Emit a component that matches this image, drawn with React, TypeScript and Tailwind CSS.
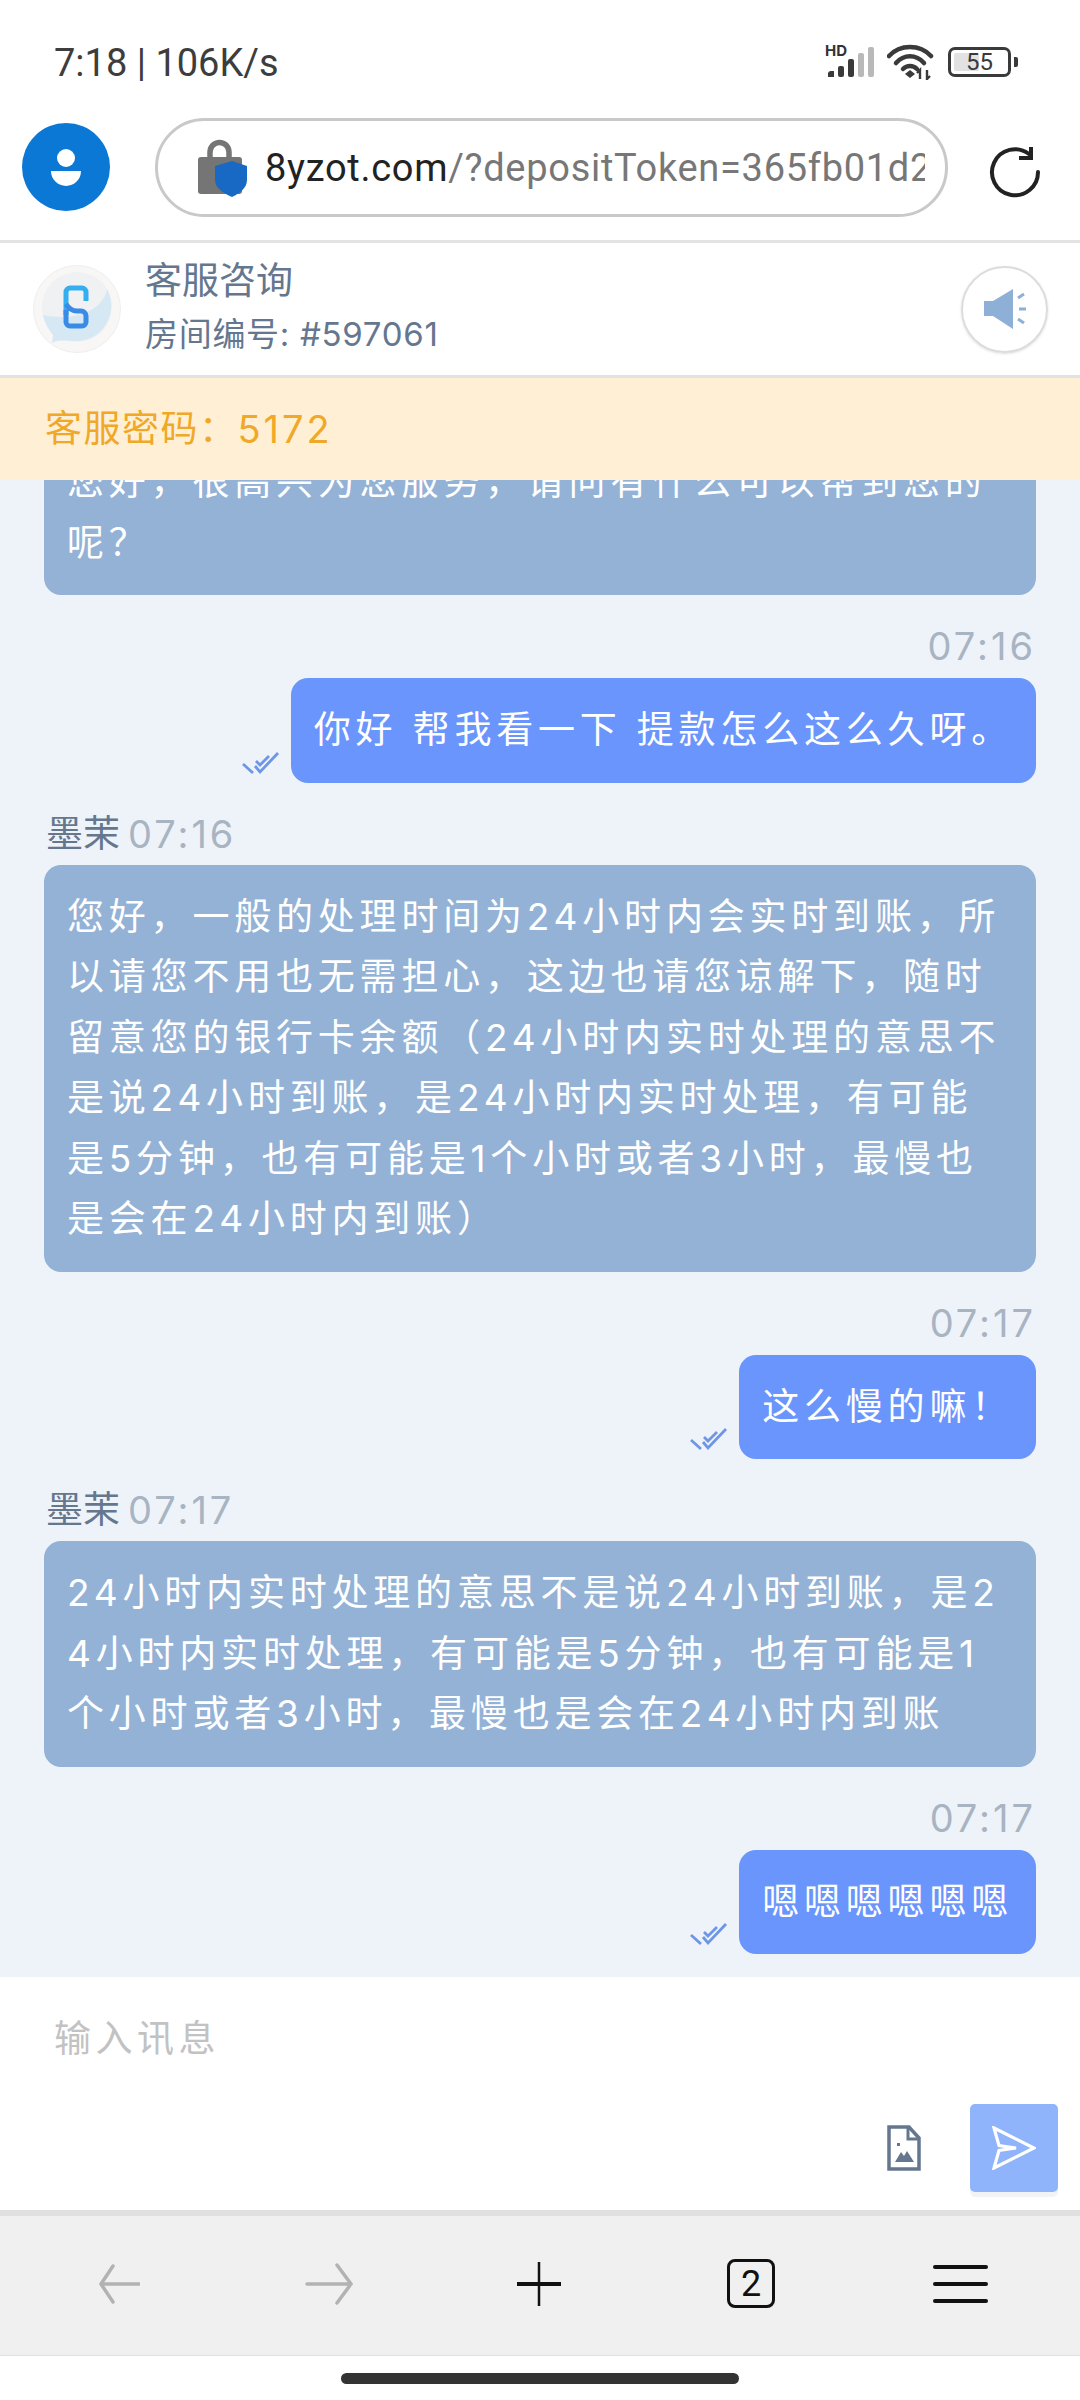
const statusIcons = (
  <div className="flex items-center">
    <div className="relative w-[50px] h-[32px]">
      <span className="absolute left-0 top-[-3px] text-[15px] leading-[16px] font-bold text-[#333] font-[Inter,sans-serif]">HD</span>
      <svg width="50" height="32" viewBox="0 0 50 32" className="absolute left-0 top-0">
        <path d="M3 27a3 3 0 0 1 3-2h3v6H3z" fill="#3a3a3a" />
        <rect x="13" y="20" width="6" height="11" rx="2" fill="#3a3a3a" />
        <rect x="23" y="13" width="6" height="18" rx="2" fill="#3a3a3a" />
        <rect x="33" y="7" width="6" height="24" rx="2" fill="#b9b9b9" />
        <rect x="43" y="1" width="6" height="30" rx="2" fill="#b9b9b9" />
      </svg>
    </div>
    <svg width="48" height="36" viewBox="0 0 48 36" className="ml-[12px]">
      <path d="M2 12C13 0 33 0 44 12" fill="none" stroke="#3a3a3a" strokeWidth="4.500" strokeLinecap="round" />
      <path d="M9 19C17 10 29 10 37 19" fill="none" stroke="#3a3a3a" strokeWidth="4.500" strokeLinecap="round" />
      <path d="M16 25C20 21 26 21 30 25" fill="none" stroke="#3a3a3a" strokeWidth="4.500" strokeLinecap="round" />
      <path d="M18 30L23 26L28 30L23 34Z" fill="#3a3a3a" />
      <path d="M33 35V26L30 29M40 26V35L43 32" fill="none" stroke="#3a3a3a" strokeWidth="2.400" />
    </svg>
    <div className="ml-[13px] flex items-center">
      <div className="w-[63px] h-[30px] rounded-[7px] border-[3px] border-[#3a3a3a] p-[3px] relative">
        <div className="w-[25px] h-full bg-[#e2e2e2] rounded-[2px]" />
        <span className="absolute inset-0 flex items-center justify-center text-[24px] leading-none text-[#3a3a3a] font-[Roboto,sans-serif]">55</span>
      </div>
      <div className="ml-[3px] w-[4px] h-[10px] rounded-r-[2px] bg-[#3a3a3a]" />
    </div>
  </div>
);

const lockIcon = (
  <svg width="50" height="58" viewBox="0 0 50 58" className="shrink-0">
    <path d="M12 20V13a9.500 9.500 0 0 1 19 0v7" fill="none" stroke="#757575" strokeWidth="5.500" />
    <rect x="0" y="18" width="44" height="37" rx="3" fill="#757575" />
    <path d="M34 22L49 27V41C49 49 42 54 34 58C25 54 17 49 17 41V27Z" fill="#1769c4" />
  </svg>
);

const doubleCheck = (
  <svg width="38" height="24" viewBox="0 0 38 24" className="mb-[7px] mr-[11px] shrink-0">
    <path d="M1 12L11 21M13 14L18 20L36 1M14 9L18 13L27 4" fill="none" stroke="#6e96e6" strokeWidth="2.800" />
  </svg>
);

function Bubble({ side, text }: { side: 'left' | 'right'; text: string }) {
  const color = side === 'left' ? 'bg-[#93b2d6] w-full' : 'bg-[#6a95fd]';
  return (
    <div className={`${color} rounded-[17px] px-[23px] py-[22px] text-white text-[37px] leading-[60.5px] tracking-[4.8px] whitespace-pre`}>
      {text}
    </div>
  );
}

function Incoming({ name, time, text }: { name: string; time: string; text: string }) {
  return (
    <div className="mt-[31px]">
      <div className="h-[40px] mb-[11px] flex items-center gap-[8px] pl-[2px] text-[37px] leading-[40px]">
        <span className="text-[#64778f]">{name}</span>
        <span className="text-[#a9b4c2] text-[38px] tracking-[3px]">{time}</span>
      </div>
      <Bubble side="left" text={text} />
    </div>
  );
}

function Outgoing({ time, text }: { time: string; text: string }) {
  return (
    <div className="mt-[31px]">
      <div className="h-[40px] mb-[12px] text-right text-[38px] leading-[40px] text-[#a9b4c2] tracking-[3px]">{time}</div>
      <div className="flex justify-end items-end">
        {doubleCheck}
        <Bubble side="right" text={text} />
      </div>
    </div>
  );
}

export default function App() {
  return (
    <div className="w-[1080px] h-[2400px] bg-white flex flex-col overflow-hidden font-[Inter,'Noto_Sans_CJK_SC',sans-serif]">
      {/* status bar */}
      <div className="h-[118px] pt-[44px] pl-[54px] pr-[62px] flex justify-between items-start shrink-0">
        <span className="text-[38px] leading-[38px] text-[#3d3d3d] font-[Roboto,sans-serif]">7:18 | 106K/s</span>
        {statusIcons}
      </div>

      {/* browser bar */}
      <div className="h-[125px] flex items-start pl-[22px] shrink-0 border-b-[3px] border-[#e3e3e3]">
        <div className="w-[88px] h-[88px] mt-[5px] rounded-full bg-[#0a78d4] flex flex-col items-center justify-center shrink-0">
          <div className="w-[18px] h-[18px] rounded-full bg-white" />
          <div className="w-[30px] h-[15px] mt-[4px] rounded-t-[5px] rounded-b-full bg-white" />
        </div>
        <div className="ml-[45px] w-[793px] h-[99px] rounded-full border-[3px] border-[#c9c9c9] flex items-center pl-[40px]">
          {lockIcon}
          <div className="ml-[17px] w-[660px] overflow-hidden whitespace-nowrap text-[38px] leading-[50px] tracking-[0.7px] text-[#777] font-[Roboto,sans-serif]">
            <span className="text-[#222]">8yzot.com</span>/?depositToken=365fb01d2a9c
          </div>
        </div>
        <svg width="54" height="54" viewBox="0 0 54 54" className="ml-[40px] mt-[28px] shrink-0">
          <path d="M41 8A23 23 0 1 0 50 26" fill="none" stroke="#222" strokeWidth="4" strokeLinecap="round" />
          <path d="M43 1V12H31" fill="none" stroke="#222" strokeWidth="4" />
        </svg>
      </div>

      {/* chat header */}
      <div className="h-[135px] flex items-center pl-[33px] pr-[32px] shrink-0 border-b-[3px] border-[#e2e2e2]">
        <svg width="88" height="88" viewBox="0 0 88 88" className="shrink-0">
          <circle cx="44" cy="44" r="43.500" fill="#f8f7f6" stroke="#eeeeee" />
          <circle cx="44" cy="42" r="35" fill="#eff1f3" />
          <path d="M74 24C72 40 50 58 10 50C12 60 17 66 20 70L19 78C26 74 34 76 44 76C62 76 76 62 78 44C79 36 77 30 74 24Z" fill="#d6e8f4" />
          <path d="M33 50V27a4 4 0 0 1 4-4h12a4 4 0 0 1 4 4v9" fill="none" stroke="#35aef0" strokeWidth="5" />
          <path d="M33 45v12a4 4 0 0 0 4 4h12a4 4 0 0 0 4-4V51a5 5 0 0 0-5-5h-4c-4 0-8-2-11-7" fill="none" stroke="#3a8ae8" strokeWidth="5" />
        </svg>
        <div className="ml-[24px] flex-1 text-[#64778f]">
          <div className="mt-[-8px] text-[37px] leading-[50px]">客服咨询</div>
          <div className="mt-[8px] text-[33px] leading-[40px] tracking-[0.7px]">房间编号: #597061</div>
        </div>
        <div className="w-[87px] h-[87px] rounded-full border-2 border-[#dcdcdc] shadow-sm flex items-center justify-center">
          <svg width="42" height="40" viewBox="0 0 42 40">
            <path d="M0 12H9L29 0V40L9 27H0Z" fill="#8fb0d6" />
            <path d="M34 9L40 5M35 20H42M34 30L40 34" fill="none" stroke="#8fb0d6" strokeWidth="3" />
          </svg>
        </div>
      </div>

      {/* password banner */}
      <div className="h-[102px] bg-[#fff0d5] flex items-center pl-[45px] text-[37px] text-[#f0a828] tracking-[1.5px] shrink-0 relative z-10">
        客服密码：<span className="text-[38px] tracking-[3px]">5172</span>
      </div>

      {/* messages */}
      <div className="h-[1497px] bg-[#eef3fa] overflow-hidden flex flex-col justify-end px-[44px] pb-[23px] shrink-0">
        <div className="shrink-0">
          <Bubble side="left" text={'您好，很高兴为您服务，请问有什么可以帮到您的\n呢？'} />
        </div>
        <Outgoing time="07:16" text="你好 帮我看一下 提款怎么这么久呀。" />
        <Incoming
          name="墨茉"
          time="07:16"
          text={'您好，一般的处理时间为24小时内会实时到账，所\n以请您不用也无需担心，这边也请您谅解下，随时\n留意您的银行卡余额（24小时内实时处理的意思不\n是说24小时到账，是24小时内实时处理，有可能\n是5分钟，也有可能是1个小时或者3小时，最慢也\n是会在24小时内到账）'}
        />
        <Outgoing time="07:17" text="这么慢的嘛！" />
        <Incoming
          name="墨茉"
          time="07:17"
          text={'24小时内实时处理的意思不是说24小时到账，是2\n4小时内实时处理，有可能是5分钟，也有可能是1\n个小时或者3小时，最慢也是会在24小时内到账'}
        />
        <Outgoing time="07:17" text="嗯嗯嗯嗯嗯嗯" />
      </div>

      {/* input */}
      <div className="h-[233px] relative shrink-0 bg-white">
        <div className="pt-[38px] pl-[54px] text-[37px] leading-[48px] tracking-[4.500px] text-[#c2c2c2]">输入讯息</div>
        <div className="absolute right-[22px] bottom-[18px] flex items-center">
          <svg width="34" height="46" viewBox="0 0 34 46" className="mr-[49px]">
            <path d="M2 2H22L32 13V44H2Z" fill="none" stroke="#64778f" strokeWidth="3.500" />
            <path d="M21 2V14H32" fill="none" stroke="#64778f" strokeWidth="3" />
            <path d="M8 37L14 27L17 31L20 26L27 37Z" fill="#64778f" />
            <rect x="10" y="18" width="3" height="3" fill="#64778f" />
          </svg>
          <div className="w-[88px] h-[88px] rounded-[5px] bg-[#8fb4fb] shadow-[0_5px_0_#f1f3f6] flex items-center justify-center">
            <svg width="44" height="44" viewBox="0 0 44 44">
              <path d="M2 2L42 22L2 42L7 24.500L24 22L7 19.500Z" fill="none" stroke="#fff" strokeWidth="3.200" />
            </svg>
          </div>
        </div>
      </div>

      {/* browser toolbar */}
      <div className="h-[146px] pb-[4px] bg-[#f0f0f0] border-t-[6px] border-t-[#e0e0e0] border-b border-b-[#e2e2e2] shrink-0 grid grid-cols-[210px_210px_210px_210px_1fr] items-center">
        <div className="flex justify-center pl-[28px]">
          <svg width="42" height="40" viewBox="0 0 42 40"><path d="M15 2L3 20L15 38M3 20H41" fill="none" stroke="#b2b2b2" strokeWidth="3.500" strokeLinecap="round" /></svg>
        </div>
        <div className="flex justify-center pl-[28px]">
          <svg width="48" height="42" viewBox="0 0 48 42"><path d="M32 2L46 21L32 40M2 21H46" fill="none" stroke="#b2b2b2" strokeWidth="3.500" strokeLinecap="round" /></svg>
        </div>
        <div className="flex justify-center pl-[28px]">
          <svg width="44" height="44" viewBox="0 0 44 44"><path d="M22 0V44" stroke="#111" strokeWidth="2.500" /><path d="M0 22H44" stroke="#111" strokeWidth="4" /></svg>
        </div>
        <div className="flex justify-center pl-[32px]">
          <div className="w-[48px] h-[49px] rounded-[8px] border-[3px] border-[#111] flex items-center justify-center text-[36px] leading-none text-[#111] font-[Roboto,sans-serif]">2</div>
        </div>
        <div className="flex flex-col items-center gap-[13px]">
          <div className="w-[55px] h-[4px] rounded-full bg-[#111]" />
          <div className="w-[55px] h-[4px] rounded-full bg-[#111]" />
          <div className="w-[55px] h-[4px] rounded-full bg-[#111]" />
        </div>
      </div>

      {/* home indicator */}
      <div className="pt-[17px] flex justify-center">
        <div className="w-[398px] h-[11px] rounded-full bg-[#333]" />
      </div>
    </div>
  );
}
